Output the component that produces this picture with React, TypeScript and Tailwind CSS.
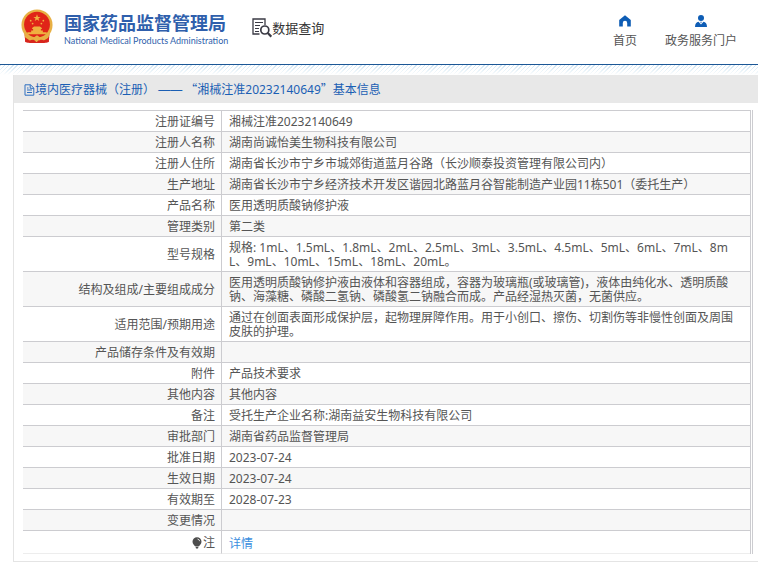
import React from 'react';

interface RecordRow {
  label: string;
  lines: string[];
}

const rows: RecordRow[] = [
  { label: '注册证编号', lines: ['湘械注准20232140649'] },
  { label: '注册人名称', lines: ['湖南尚诚怡美生物科技有限公司'] },
  { label: '注册人住所', lines: ['湖南省长沙市宁乡市城郊街道蓝月谷路（长沙顺泰投资管理有限公司内）'] },
  { label: '生产地址', lines: ['湖南省长沙市宁乡经济技术开发区谐园北路蓝月谷智能制造产业园11栋501（委托生产）'] },
  { label: '产品名称', lines: ['医用透明质酸钠修护液'] },
  { label: '管理类别', lines: ['第二类'] },
  {
    label: '型号规格',
    lines: [
      '规格: 1mL、1.5mL、1.8mL、2mL、2.5mL、3mL、3.5mL、4.5mL、5mL、6mL、7mL、8m',
      'L、9mL、10mL、15mL、18mL、20mL。',
    ],
  },
  {
    label: '结构及组成/主要组成成分',
    lines: [
      '医用透明质酸钠修护液由液体和容器组成，容器为玻璃瓶(或玻璃管)，液体由纯化水、透明质酸',
      '钠、海藻糖、磷酸二氢钠、磷酸氢二钠融合而成。产品经湿热灭菌，无菌供应。',
    ],
  },
  {
    label: '适用范围/预期用途',
    lines: [
      '通过在创面表面形成保护层，起物理屏障作用。用于小创口、擦伤、切割伤等非慢性创面及周围',
      '皮肤的护理。',
    ],
  },
  { label: '产品储存条件及有效期', lines: [] },
  { label: '附件', lines: ['产品技术要求'] },
  { label: '其他内容', lines: ['其他内容'] },
  { label: '备注', lines: ['受托生产企业名称:湖南益安生物科技有限公司'] },
  { label: '审批部门', lines: ['湖南省药品监督管理局'] },
  { label: '批准日期', lines: ['2023-07-24'] },
  { label: '生效日期', lines: ['2023-07-24'] },
  { label: '有效期至', lines: ['2028-07-23'] },
  { label: '变更情况', lines: [] },
];

function Emblem() {
  return (
    <svg viewBox="0 0 34 36" className="h-[35px] w-[34px]" aria-hidden="true">
      <path d="M4 24h26l-1 10-4.500 1h-15L5 34z" fill="#d8251d" />
      <circle cx="17" cy="16.500" r="16" fill="#e8b044" />
      <circle cx="17" cy="16" r="13.300" fill="#e02418" />
      <path d="M17 5.500l1 2.600h2.700l-2.200 1.700.8 2.600-2.300-1.600-2.300 1.600.8-2.600-2.200-1.700H16z" fill="#f0b040" />
      <g fill="#f0b040">
        <circle cx="10.500" cy="12" r=".9" />
        <circle cx="12.500" cy="15" r=".9" />
        <circle cx="21.500" cy="15" r=".9" />
        <circle cx="23.500" cy="12" r=".9" />
        <path d="M12 19.500l2-1.500h6l2 1.500v1h-1V22h2v2h4v2H7v-2h4v-2h2v-1.500h-1z" />
      </g>
      <path d="M4 26l6 4 4-1 3-2 3 2 4 1 6-4-2 5-5 1.500-4-1.500-2 3h-1l-2-3-4 1.500L5 31z" fill="#e8b044" />
      <path d="M4.500 29l4 2.500-.5 3-3-.5zM29.500 29l-4 2.500.5 3 3-.5zM10.500 32l3-.5 1.500 3.500h-4.500zM23.500 32l-3-.5-1.500 3.500h4.500z" fill="#d8251d" />
    </svg>
  );
}

function SearchDocIcon() {
  return (
    <svg viewBox="0 0 20 20" className="h-5 w-5" fill="none" stroke="#3a3a44" aria-hidden="true">
      <path d="M7.500 16H1V1h12v6" strokeWidth="1.300" />
      <path d="M3 4.500h8M3 7.500h5M3 10.500h4M3 13.500h4" strokeWidth="1" />
      <circle cx="12.800" cy="12" r="4" strokeWidth="1.700" />
      <path d="M15.800 15l3.500 3.700" strokeWidth="2.200" />
    </svg>
  );
}

function HomeIcon() {
  return (
    <svg viewBox="0 0 12 12" className="h-3 w-3" fill="#0e5db5" aria-hidden="true">
      <path d="M6 .3L.2 5v6.500h3.600V8a2.200 2.200 0 0 1 4.400 0v3.500h3.600V5z" />
    </svg>
  );
}

function UserIcon() {
  return (
    <svg viewBox="0 0 12 12" className="h-3 w-3" fill="#0e5db5" aria-hidden="true">
      <circle cx="6" cy="3" r="3" />
      <path d="M0 12c0-3.500 1.500-5 3.500-5.300L6 9.500l2.500-2.800C10.500 7 12 8.500 12 12z" />
      <path d="M5.200 6.800h1.600L6 8.600z" />
    </svg>
  );
}

function DocIcon() {
  return (
    <svg viewBox="0 0 11 12" className="h-3 w-[11px] shrink-0" fill="none" stroke="#2e6fc0" aria-hidden="true">
      <path d="M1 .8h5.500L9.800 4v7.200H1zM6.200.8v3.500h3.600M3 6h5M3 8.500h5M3 4h1.500" />
    </svg>
  );
}

function BulbIcon() {
  return (
    <svg viewBox="0 0 10 12" className="h-3 w-[10px]" aria-hidden="true">
      <path d="M5 .3a4.500 4.500 0 0 1 4.500 4.500C9.500 7.200 7.500 8.300 7 9.300H3C2.500 8.300.5 7.200.5 4.800A4.500 4.500 0 0 1 5 .3zM3.500 9.800h3l-.5 1.700H4z" fill="#4d4d4d" />
      <path d="M5.500 2a2.700 2.700 0 0 1 2.200 2.200" stroke="#ddd" fill="none" />
    </svg>
  );
}

export default function App() {
  return (
    <div className="min-h-screen bg-white font-['Noto_Sans','Noto_Sans_CJK_SC',sans-serif] text-xs text-[#555]">
      {/* 页头 */}
      <header className="flex h-[65px] items-start justify-between border-b border-[#1c5796] pr-[21px] pl-5">
        <div className="flex items-start">
          <a href="#" className="flex items-start gap-[10px] pt-[9px] text-[#2f5fac]">
            <Emblem />
            <span className="flex flex-col pt-1">
              <span className="text-[18px] leading-5 font-bold whitespace-nowrap">国家药品监督管理局</span>
              <span className="pt-[2px] font-['Lato',sans-serif] text-[9px] leading-3 whitespace-nowrap">
                National Medical Products Administration
              </span>
            </span>
          </a>
          <a href="#" className="ml-6 flex items-center pt-[18px] text-[13px] leading-5 whitespace-nowrap text-[#333]">
            <SearchDocIcon />
            数据查询
          </a>
        </div>
        <nav className="flex gap-7 pt-[15px] leading-4 whitespace-nowrap">
          <a href="#" className="flex flex-col items-center gap-[6px]">
            <HomeIcon />
            首页
          </a>
          <a href="#" className="flex flex-col items-center gap-[6px]">
            <UserIcon />
            政务服务门户
          </a>
        </nav>
      </header>
      <div className="h-[10px] bg-[repeating-linear-gradient(135deg,#cfe4f2_0px,#cfe4f2_1px,#ffffff_1px,#ffffff_3px)] mask-b-from-0%" />

      {/* 基本信息 */}
      <main className="ml-[13px] border-b border-l border-[#e4e4e4] pb-[7px]">
        <h1 className="flex h-7 items-center bg-[#e8e8e8] pt-px pl-[10px] whitespace-pre text-[#1b5fb4]">
          <DocIcon />
          <span>
            境内医疗器械（注册） <span className="font-['Liberation_Sans',sans-serif]">——</span>{' '}
            <span lang="zh-CN" className="font-['Noto_Sans_CJK_SC',sans-serif]">“</span>湘械注准20232140649
            <span lang="zh-CN" className="font-['Noto_Sans_CJK_SC',sans-serif]">”</span>基本信息
          </span>
        </h1>
        <div className="mt-[7px] mr-[5px] ml-[9px] border-r border-[#ccccd0] pr-px">
          <table className="w-full border-separate border-spacing-0 border-r border-[#ccccd0] leading-[14px]">
            <tbody>
              {rows.map((row) => (
                <tr key={row.label} className="even:bg-[#f7f7f7]">
                  <th
                    scope="row"
                    className="h-[21px] w-[199px] border-t border-r border-[#ccccd0] pt-1 pr-[6px] pb-[2px] text-right font-normal"
                  >
                    {row.label}
                  </th>
                  <td className="border-t border-[#ccccd0] pt-1 pb-[2px] pl-[7px] whitespace-pre-line">
                    {row.lines.join('\n')}
                  </td>
                </tr>
              ))}
              <tr>
                <th
                  scope="row"
                  className="h-6 border-t border-r border-b border-[#ccccd0] border-b-[#ededed] pt-1 pr-[6px] pb-[2px] text-right font-normal"
                >
                  <span className="flex items-center justify-end gap-px">
                    <BulbIcon />注
                  </span>
                </th>
                <td className="border-t border-b border-[#ccccd0] border-b-[#ededed] pt-1 pl-[7px]">
                  <a href="#" className="text-[#3b8ede]">详情</a>
                </td>
              </tr>
            </tbody>
          </table>
        </div>
      </main>
    </div>
  );
}
